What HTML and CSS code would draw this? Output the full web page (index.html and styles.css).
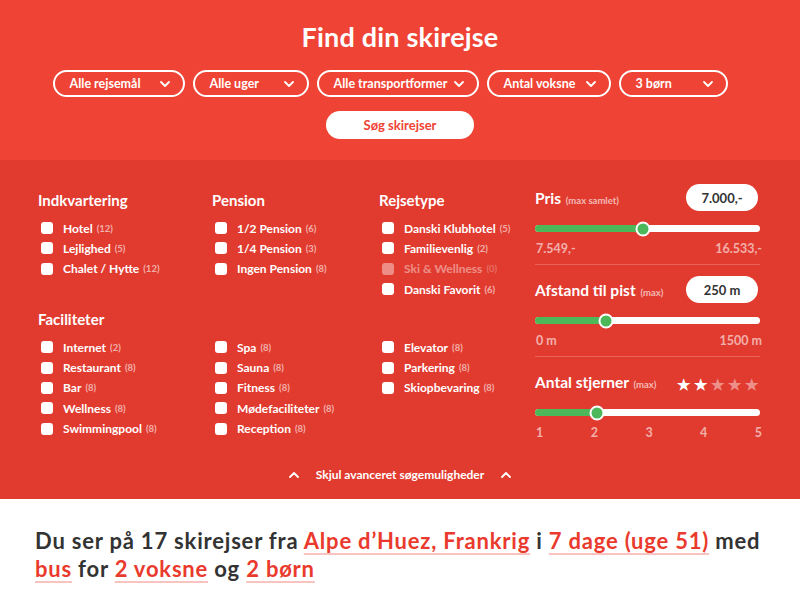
FILE: index.html
```html
<!DOCTYPE html>
<html lang="da">
<head>
<meta charset="utf-8">
<title>Find din skirejse</title>
<link rel="stylesheet" href="styles.css">
</head>
<body>
<header class="hero">
  <h1 class="hero-title">Find din skirejse</h1>
  <div class="selects">
    <div class="select s1"><span>Alle rejsemål</span><svg class="chev" viewBox="0 0 10 6"><path d="M1 1l4 4 4-4"/></svg></div>
    <div class="select s2"><span>Alle uger</span><svg class="chev" viewBox="0 0 10 6"><path d="M1 1l4 4 4-4"/></svg></div>
    <div class="select s3"><span>Alle transportformer</span><svg class="chev" viewBox="0 0 10 6"><path d="M1 1l4 4 4-4"/></svg></div>
    <div class="select s4"><span>Antal voksne</span><svg class="chev" viewBox="0 0 10 6"><path d="M1 1l4 4 4-4"/></svg></div>
    <div class="select s5"><span>3 børn</span><svg class="chev" viewBox="0 0 10 6"><path d="M1 1l4 4 4-4"/></svg></div>
  </div>
  <button class="search-btn">Søg skirejser</button>
</header>

<section class="filters">
  <div class="filter-body">
    <div class="groups">
      <div class="group">
        <h2 class="group-title">Indkvartering</h2>
        <ul class="list">
          <li class="item"><span class="box"></span>Hotel <small>(12)</small></li>
          <li class="item"><span class="box"></span>Lejlighed <small>(5)</small></li>
          <li class="item"><span class="box"></span>Chalet / Hytte <small>(12)</small></li>
        </ul>
      </div>
      <div class="group">
        <h2 class="group-title">Pension</h2>
        <ul class="list">
          <li class="item"><span class="box"></span>1/2 Pension <small>(6)</small></li>
          <li class="item"><span class="box"></span>1/4 Pension <small>(3)</small></li>
          <li class="item"><span class="box"></span>Ingen Pension <small>(8)</small></li>
        </ul>
      </div>
      <div class="group">
        <h2 class="group-title">Rejsetype</h2>
        <ul class="list">
          <li class="item"><span class="box"></span>Danski Klubhotel <small>(5)</small></li>
          <li class="item"><span class="box"></span>Familievenlig <small>(2)</small></li>
          <li class="item disabled"><span class="box"></span>Ski &amp; Wellness <small>(0)</small></li>
          <li class="item"><span class="box"></span>Danski Favorit <small>(6)</small></li>
        </ul>
      </div>
      <h2 class="group-title wide">Faciliteter</h2>
      <ul class="list">
        <li class="item"><span class="box"></span>Internet <small>(2)</small></li>
        <li class="item"><span class="box"></span>Restaurant <small>(8)</small></li>
        <li class="item"><span class="box"></span>Bar <small>(8)</small></li>
        <li class="item"><span class="box"></span>Wellness <small>(8)</small></li>
        <li class="item"><span class="box"></span>Swimmingpool <small>(8)</small></li>
      </ul>
      <ul class="list">
        <li class="item"><span class="box"></span>Spa <small>(8)</small></li>
        <li class="item"><span class="box"></span>Sauna <small>(8)</small></li>
        <li class="item"><span class="box"></span>Fitness <small>(8)</small></li>
        <li class="item"><span class="box"></span>Mødefaciliteter <small>(8)</small></li>
        <li class="item"><span class="box"></span>Reception <small>(8)</small></li>
      </ul>
      <ul class="list">
        <li class="item"><span class="box"></span>Elevator <small>(8)</small></li>
        <li class="item"><span class="box"></span>Parkering <small>(8)</small></li>
        <li class="item"><span class="box"></span>Skiopbevaring <small>(8)</small></li>
      </ul>
    </div>

    <div class="ranges">
      <div class="range">
        <div class="range-head">
          <h3 class="range-title">Pris <small>(max samlet)</small></h3>
          <span class="value-pill">7.000,-</span>
        </div>
        <div class="track"><div class="fill" style="width:48.2%"></div><span class="thumb" style="left:48.2%"></span></div>
        <div class="range-labels"><span>7.549,-</span><span>16.533,-</span></div>
      </div>
      <div class="range">
        <div class="range-head">
          <h3 class="range-title">Afstand til pist <small>(max)</small></h3>
          <span class="value-pill">250 m</span>
        </div>
        <div class="track"><div class="fill" style="width:31.5%"></div><span class="thumb" style="left:31.5%"></span></div>
        <div class="range-labels"><span>0 m</span><span>1500 m</span></div>
      </div>
      <div class="range last">
        <div class="range-head">
          <h3 class="range-title">Antal stjerner <small>(max)</small></h3>
          <span class="stars"><span class="star on">★</span><span class="star on">★</span><span class="star">★</span><span class="star">★</span><span class="star">★</span></span>
        </div>
        <div class="track"><div class="fill" style="width:27.5%"></div><span class="thumb" style="left:27.5%"></span></div>
        <div class="range-labels"><span>1</span><span>2</span><span>3</span><span>4</span><span>5</span></div>
      </div>
    </div>
  </div>

  <div class="toggle">
    <svg class="up" viewBox="0 0 10 6"><path d="M1 5l4-4 4 4"/></svg>
    <span>Skjul avanceret søgemuligheder</span>
    <svg class="up" viewBox="0 0 10 6"><path d="M1 5l4-4 4 4"/></svg>
  </div>
</section>

<section class="summary">
  <p class="summary-text">Du ser på 17 skirejser fra <a class="hl">Alpe d’Huez, Frankrig</a> i <a class="hl">7 dage (uge 51)</a> med <a class="hl">bus</a> for <a class="hl">2 voksne</a> og <a class="hl">2 børn</a></p>
</section>
</body>
</html>
```

FILE: styles.css
```css
* { box-sizing: border-box; }
html, body { margin: 0; padding: 0; }
body {
  font-family: "Lato", "Open Sans", sans-serif;
  font-weight: 700;
  color: #fff;
  background: #fff;
  width: 800px;
  overflow: hidden;
}

/* HERO */
.hero {
  background: #ef4335;
  padding: 21px 0 21px;
  display: flex;
  flex-direction: column;
  align-items: center;
}
.hero-title {
  margin: 0;
  font-size: 27px;
  line-height: 32px;
  font-weight: 700;
  letter-spacing: 0.2px;
}
.selects {
  display: flex;
  gap: 8px;
  margin-top: 17px;
  padding-right: 20px;
}
.select {
  height: 27px;
  border: 2px solid #fff;
  border-radius: 14px;
  display: flex;
  align-items: center;
  justify-content: space-between;
  padding: 0 13px 0 15px;
  font-size: 12.5px;
}
.s1 { width: 132px; }
.s2 { width: 116px; }
.s3 { width: 162px; }
.s4 { width: 124px; }
.s5 { width: 109px; }
.chev, .up {
  width: 10px;
  height: 6px;
  fill: none;
  stroke: #fff;
  stroke-width: 1.8;
  stroke-linecap: round;
  stroke-linejoin: round;
}
.search-btn {
  margin-top: 14px;
  width: 148px;
  height: 28px;
  border: 0;
  border-radius: 14px;
  background: #fff;
  color: #ef4335;
  font-family: inherit;
  font-weight: 700;
  font-size: 13px;
  padding: 0;
}

/* FILTERS */
.filters {
  background: #e13b2f;
  padding: 24px 0 14px;
}
.filter-body {
  display: flex;
  padding: 0 40px 0 38px;
}
.groups {
  width: 497px;
  display: grid;
  grid-template-columns: 174px 167px 1fr;
  align-content: start;
  padding-top: 6px;
}
.group-title {
  margin: 0 0 8px;
  font-size: 15px;
  line-height: 20px;
  font-weight: 700;
}
.group-title.wide {
  grid-column: 1 / -1;
  margin-top: 10px;
}
.list {
  list-style: none;
  margin: 0;
  padding: 0;
}
.item {
  display: flex;
  align-items: center;
  height: 20.3px;
  font-size: 12px;
}
.item small {
  font-size: 9.5px;
  color: rgba(255, 255, 255, 0.6);
  margin-left: 4px;
}
.box {
  width: 12px;
  height: 12px;
  background: #fff;
  border-radius: 3px;
  margin: 0 10px 0 3px;
  flex: none;
}
.item.disabled { opacity: 0.42; }

/* RANGES */
.ranges {
  width: 225px;
}
.range {
  padding: 0 0 7px;
  border-bottom: 1px solid rgba(255, 255, 255, 0.2);
  margin-bottom: 11px;
}
.range.last { border-bottom: 0; margin-bottom: 0; padding-bottom: 0; }
.range-head {
  display: flex;
  align-items: center;
  justify-content: space-between;
  height: 27px;
}
.range-title {
  margin: 0;
  font-size: 15.5px;
  font-weight: 700;
}
.range-title small {
  font-size: 9.5px;
  color: rgba(255, 255, 255, 0.65);
  margin-left: 1px;
}
.value-pill {
  background: #fff;
  color: #333;
  border-radius: 14px;
  height: 27px;
  width: 72px;
  margin-right: 2px;
  display: flex;
  align-items: center;
  justify-content: center;
  font-size: 13px;
}
.track {
  position: relative;
  margin-top: 14px;
  height: 7px;
  background: #fff;
  border-radius: 4px;
}
.fill {
  height: 100%;
  background: #4cb85a;
  border-radius: 4px 0 0 4px;
}
.thumb {
  position: absolute;
  top: 50%;
  width: 15px;
  height: 15px;
  border-radius: 50%;
  background: #4cb85a;
  border: 2px solid #fff;
  transform: translate(-50%, -50%);
}
.range-labels {
  display: flex;
  justify-content: space-between;
  margin-top: 9px;
  font-size: 12.5px;
  line-height: 16px;
  color: rgba(255, 255, 255, 0.6);
  padding: 0 0 0 1px;
  margin-right: -2px;
}
.stars {
  display: flex;
  gap: 3px;
  font-size: 15px;
  line-height: 16px;
  padding-right: 2px;
  margin-top: 4px;
}
.star { color: rgba(255, 255, 255, 0.45); width: 14px; text-align: center; }
.star.on { color: #fff; }

/* TOGGLE */
.toggle {
  margin-top: 24px;
  display: flex;
  justify-content: center;
  align-items: center;
  gap: 17px;
  font-size: 12px;
  line-height: 20px;
}

/* SUMMARY */
.summary {
  padding: 28px 35px 20px;
}
.summary-text {
  margin: 0;
  color: #333;
  font-size: 22px;
  line-height: 28px;
  font-weight: 700;
  letter-spacing: 0.8px;
}
.hl {
  color: #ea3a2d;
  text-decoration: underline;
  text-decoration-color: rgba(234, 58, 45, 0.3);
  text-decoration-thickness: 2px;
  text-underline-offset: 4px;
}
```
